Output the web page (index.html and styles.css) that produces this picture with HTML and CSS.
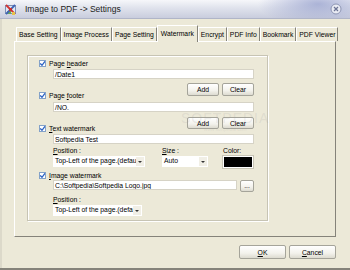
FILE: index.html
```html
<!DOCTYPE html>
<html lang="en">
<head>
    <meta charset="UTF-8">
    <title>Image to PDF -> Settings</title>
    <link rel="stylesheet" href="styles.css">
</head>
<body>
    <div class="window">
        <!-- Title bar -->
        <div class="titlebar">
            <svg class="app-icon" width="13" height="13" viewBox="0 0 13 13">
                <rect x="1.5" y="2.5" width="10" height="8" fill="#dfe8f5" stroke="#7d8fb5"/>
                <rect x="3" y="8" width="4" height="3" fill="#6bab5a"/>
                <path d="M2 2 L11 11" stroke="#d23434" stroke-width="1.8"/>
                <path d="M11 2 L2 11" stroke="#3f63b6" stroke-width="1.8"/>
                <rect x="5" y="5" width="3" height="3" fill="#c9302c"/>
                <rect x="8" y="9" width="3" height="3" fill="#e8c24a"/>
            </svg>
            <span class="title">Image to PDF -&gt; Settings</span>
            <span class="close">
                <svg width="12" height="12" viewBox="0 0 12 12">
                    <circle cx="6" cy="6" r="5" fill="#e9ebf3" stroke="#8e96b4"/>
                    <path d="M4 4 L8 8 M8 4 L4 8" stroke="#6c7494" stroke-width="1.2"/>
                </svg>
            </span>
        </div>

        <div class="client">
            <!-- Tabs -->
            <div class="tabs">
                <span class="tab">Base Setting</span>
                <span class="tab">Image Process</span>
                <span class="tab">Page Setting</span>
                <span class="tab active">Watermark</span>
                <span class="tab">Encrypt</span>
                <span class="tab">PDF Info</span>
                <span class="tab">Bookmark</span>
                <span class="tab">PDF Viewer</span>
            </div>

            <div class="panel">
                <div class="group">
                    <label class="check row-label"><i class="box"></i><span>Page <u>h</u>eader</span></label>
                    <div class="field">/Date1</div>

                    <div class="btn-row">
                        <label class="check"><i class="box"></i><span>Page <u>f</u>ooter</span></label>
                        <span class="btns">
                            <button class="btn small">Add</button>
                            <button class="btn small">Clear</button>
                        </span>
                    </div>
                    <div class="field gap2">/NO.</div>

                    <div class="btn-row second">
                        <label class="check"><i class="box"></i><span><u>T</u>ext watermark</span></label>
                        <span class="btns">
                            <button class="btn small">Add</button>
                            <button class="btn small">Clear</button>
                        </span>
                    </div>
                    <div class="field">Softpedia Test</div>

                    <div class="opt-labels">
                        <span class="lbl pos"><u>P</u>osition :</span>
                        <span class="lbl size"><u>S</u>ize :</span>
                        <span class="lbl color">Color:</span>
                    </div>
                    <div class="opt-row">
                        <span class="select pos">Top-Left of the page.(defau<i class="arrow"></i></span>
                        <span class="select size">Auto<i class="arrow"></i></span>
                        <span class="swatch"></span>
                    </div>

                    <label class="check row-label img"><i class="box"></i><span><u>I</u>mage watermark</span></label>
                    <div class="file-row">
                        <span class="field path">C:\Softpedia\Softpedia Logo.jpg</span>
                        <button class="btn browse">...</button>
                    </div>
                    <div class="opt-labels last"><span class="lbl"><u>P</u>osition :</span></div>
                    <div class="opt-row last">
                        <span class="select pos2">Top-Left of the page.(defa<i class="arrow"></i></span>
                    </div>
                </div>
            </div>

            <div class="actions">
                <button class="btn wide"><u>O</u>K</button>
                <button class="btn wide"><u>C</u>ancel</button>
            </div>
        </div>

        <div class="softpedia">SOFTPEDIA<small>www.softpedia.com</small></div>
    </div>
</body>
</html>
```

FILE: styles.css
```css
* {
    box-sizing: border-box;
}
body {
    margin: 0;
    font-family: "Liberation Sans", Arial, sans-serif;
    font-size: 6.8px;
    color: #000;
    background: #ece9d8;
}
.window {
    position: relative;
    width: 350px;
    height: 270px;
    overflow: hidden;
    background: #ece9d8;
    border-bottom: 2px solid #85837a;
}

/* Title bar */
.titlebar {
    height: 19px;
    display: flex;
    align-items: center;
    padding: 0 8px 0 4px;
    background:
        radial-gradient(ellipse 60px 22px at 318px 4px, rgba(150, 160, 205, 0.75), rgba(150, 160, 205, 0) 100%),
        linear-gradient(to bottom, #f6f7fa 0%, #dfe2ec 45%, #c9cddd 100%);
    border-bottom: 1px solid #b0b5c8;
}
.app-icon {
    flex: none;
}
.title {
    margin-left: 8px;
    font-size: 8.5px;
    color: #222;
    flex: 1;
}
.close {
    display: flex;
}

/* Client area */
.client {
    height: 249px;
    border-left: 2px solid #dcd9ca;
    padding-top: 8px;
}
.tabs {
    display: flex;
    height: 14px;
    margin-left: 14px;
    position: relative;
    z-index: 1;
}
.tab {
    flex: none;
    height: 14px;
    padding: 0 2px;
    line-height: 13px;
    white-space: nowrap;
    border-top: 1px solid #fff;
    border-left: 1px solid #fff;
    border-right: 1px solid #85837a;
}
.tab.active {
    height: 17px;
    margin-top: -2px;
    padding: 0 3px;
    line-height: 15px;
    background: #ece9d8;
}
.panel {
    width: 322px;
    height: 196px;
    margin-left: 12px;
    border: 1px solid;
    border-color: #fff #85837a #85837a #fff;
    padding: 13px 0 0 12px;
}

/* Group box */
.group {
    width: 241px;
    height: 166px;
    border: 1px solid #c7c4b4;
    box-shadow: 1px 1px 0 #fff, inset 1px 1px 0 #fff;
    padding: 3px 13px 0 11px;
}
.check {
    display: flex;
    align-items: center;
    height: 9px;
    gap: 3px;
    white-space: nowrap;
}
.box {
    display: block;
    flex: none;
    width: 7px;
    height: 7px;
    background: #fff url("data:image/svg+xml,%3Csvg xmlns='http://www.w3.org/2000/svg' width='7' height='7'%3E%3Cpath d='M1.2 3.4 L3 5.3 L6 1.3' fill='none' stroke='%232d63c4' stroke-width='1.3'/%3E%3C/svg%3E") no-repeat center;
    border: 1px solid #84a2c8;
    background-size: 7px 7px;
}
.field {
    display: block;
    height: 10px;
    margin: 1px 0 0 14px;
    padding-left: 1px;
    line-height: 9px;
    background: #fff;
    border: 1px solid #d6d3c6;
    white-space: nowrap;
    overflow: hidden;
}
.field.gap2 {
    margin-top: 2px;
}
.btn-row {
    display: flex;
    justify-content: space-between;
    height: 17px;
    margin-top: 4px;
}
.btn-row.second {
    height: 16px;
    margin-top: 5px;
}
.btn-row .check {
    align-self: flex-end;
}
.btns {
    display: flex;
    gap: 3px;
}
.btn {
    font-family: inherit;
    font-size: 6.8px;
    color: #000;
    padding: 0;
    background: linear-gradient(to bottom, #ffffff 0%, #f3f2ec 60%, #dddbd0 100%);
    border: 1px solid #a5a49a;
    border-radius: 2px;
}
.btn.small {
    width: 32px;
    height: 13px;
}
.btn-row.second .btn.small {
    height: 12px;
}

/* Position / size / color */
.opt-labels {
    display: flex;
    height: 9px;
    margin: 2px 0 0 14px;
    line-height: 9px;
}
.lbl.pos {
    width: 109px;
}
.lbl.size {
    width: 61px;
}
.opt-row {
    display: flex;
    align-items: flex-start;
    height: 12px;
    margin: 1px 0 0 14px;
}
.select {
    position: relative;
    height: 11px;
    padding-left: 2px;
    line-height: 10px;
    background: #fff;
    white-space: nowrap;
    overflow: hidden;
}
.select.pos {
    width: 92px;
    margin-right: 17px;
}
.select.size {
    width: 46px;
    margin-right: 15px;
}
.select.pos2 {
    width: 89px;
}
.arrow {
    position: absolute;
    right: 1px;
    top: 1px;
    width: 8px;
    height: 9px;
    background: #f1efe6;
}
.arrow::after {
    content: "";
    position: absolute;
    left: 2px;
    top: 4px;
    border-left: 2px solid transparent;
    border-right: 2px solid transparent;
    border-top: 2px solid #333;
}
.swatch {
    width: 30px;
    height: 12px;
    background: #000;
    border: 1px solid #fff;
    outline: 1px solid #c8c5b6;
}

/* Image watermark */
.row-label.img {
    margin-top: 3px;
}
.file-row {
    display: flex;
    align-items: flex-start;
    height: 12px;
}
.field.path {
    width: 185px;
    margin-top: 0;
}
.btn.browse {
    width: 14px;
    height: 12px;
    margin-left: 3px;
    line-height: 6px;
}
.opt-labels.last {
    margin-top: 3px;
}

/* Dialog buttons */
.actions {
    display: flex;
    justify-content: flex-end;
    gap: 3px;
    margin-top: 8px;
    padding-right: 14px;
}
.btn.wide {
    width: 47px;
    height: 14px;
}

/* Screenshot watermark */
.softpedia {
    position: absolute;
    left: 181px;
    top: 110px;
    display: flex;
    flex-direction: column;
    align-items: center;
    font-size: 14px;
    letter-spacing: 1px;
    color: rgba(160, 160, 160, 0.18);
    pointer-events: none;
}
.softpedia small {
    font-size: 5px;
    letter-spacing: 0;
}
```
